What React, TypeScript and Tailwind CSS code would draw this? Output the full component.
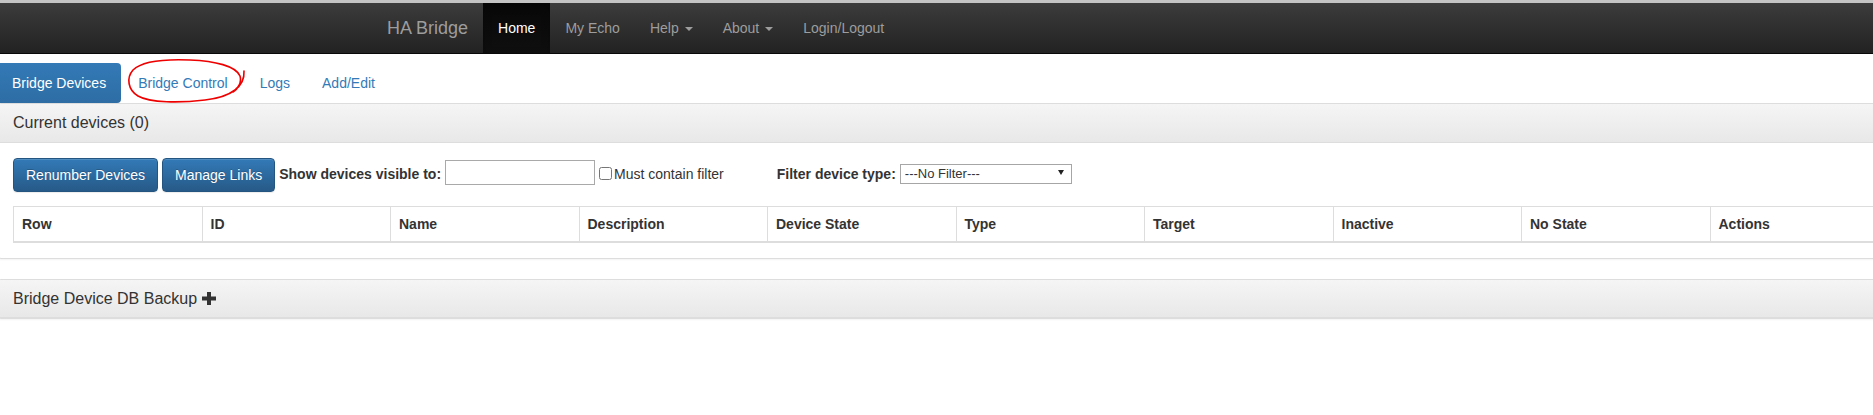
import React from "react";

const Caret = () => (
  <span className="ml-[6px] inline-block h-0 w-0 border-x-[4px] border-t-[4px] border-x-transparent border-t-current align-middle" />
);

const cols = ["Row", "ID", "Name", "Description", "Device State", "Type", "Target", "Inactive", "No State", "Actions"];

export default function App() {
  return (
    <div className="relative h-[415px] w-[1873px] overflow-hidden bg-white font-['Liberation_Sans',Arial,sans-serif] text-[14px] leading-[20px] text-[#333]">
      {/* top strip */}
      <div className="h-[3px] bg-[#c4c4c4]" />
      {/* navbar */}
      <nav className="flex h-[51px] border-b border-[#080808] bg-linear-to-b from-[#3c3c3c] to-[#222] pl-[372px]">
        <a className="h-[50px] px-[15px] py-[15px] text-[18px] leading-[20px] text-[#9d9d9d]">HA Bridge</a>
        <ul className="flex">
          <li className="h-[50px] bg-linear-to-b from-[#080808] to-[#0f0f0f] px-[15px] py-[15px] text-white shadow-[inset_0_3px_9px_rgba(0,0,0,0.25)]">Home</li>
          <li className="px-[15px] py-[15px] text-[#9d9d9d]">My Echo</li>
          <li className="px-[15px] py-[15px] text-[#9d9d9d]">
            Help<Caret />
          </li>
          <li className="px-[15px] py-[15px] text-[#9d9d9d]">
            About<Caret />
          </li>
          <li className="px-[15px] py-[15px] text-[#9d9d9d]">Login/Logout</li>
        </ul>
      </nav>

      <div className="-ml-[3px] w-[1918px]">
        {/* pills */}
        <ul className="mt-[9px] flex">
          <li className="rounded-[4px] bg-linear-to-b from-[#337ab7] to-[#2e6da4] px-[15px] py-[10px] text-white">Bridge Devices</li>
          <li className="ml-[2px] px-[15px] py-[10px] text-[#337ab7]">Bridge Control</li>
          <li className="ml-[2px] px-[15px] py-[10px] text-[#337ab7]">Logs</li>
          <li className="ml-[2px] px-[15px] py-[10px] text-[#337ab7]">Add/Edit</li>
        </ul>

        {/* panel 1 */}
        <div className="mb-[20px] rounded-[4px] border border-[#ddd] bg-white shadow-[0_1px_2px_rgba(0,0,0,0.05)]">
          <div className="rounded-t-[3px] border-b border-[#ddd] bg-linear-to-b from-[#f5f5f5] to-[#e8e8e8] px-[15px] py-[10px]">
            <h3 className="text-[16px] leading-[17.6px] text-[#333]">Current devices (0)</h3>
          </div>
          <div className="p-[15px]">
            <div className="flex items-center">
              <button className="h-[34px] rounded-[4px] border border-[#245580] bg-linear-to-b from-[#337ab7] to-[#265a88] px-[12px] text-white shadow-[inset_0_1px_0_rgba(255,255,255,0.15),0_1px_1px_rgba(0,0,0,0.075)] [text-shadow:0_-1px_0_rgba(0,0,0,0.2)]">
                Renumber Devices
              </button>
              <button className="ml-[4px] h-[34px] rounded-[4px] border border-[#245580] bg-linear-to-b from-[#337ab7] to-[#265a88] px-[12px] text-white shadow-[inset_0_1px_0_rgba(255,255,255,0.15),0_1px_1px_rgba(0,0,0,0.075)] [text-shadow:0_-1px_0_rgba(0,0,0,0.2)]">
                Manage Links
              </button>
              <label className="mb-[2px] ml-[4px] text-[14px] font-bold">Show devices visible to:</label>
              <input
                type="text"
                className="mb-[4px] ml-[4px] h-[25px] w-[150px] border border-[#a9a9a9] px-[2px] text-[13px]"
              />
              <input type="checkbox" className="mb-[2px] ml-[4px] mr-[2px] h-[13px] w-[13px]" />
              <span className="mb-[2px] text-[14px]">Must contain filter</span>
              <label className="mb-[2px] ml-[53px] text-[14px] font-bold">Filter device type:</label>
              <div className="relative mb-[4px] ml-[4px] h-[20px] w-[172px]">
                <select className="h-[20px] w-full appearance-none border border-[#a6a6a6] bg-white pl-[4px] text-[13px] leading-[18px] text-[#333]">
                  <option>---No Filter---</option>
                </select>
                <span className="pointer-events-none absolute right-[8px] top-[7px] h-0 w-0 border-x-[3px] border-t-[5px] border-x-transparent border-t-[#222]" />
              </div>
            </div>
            <table className="mt-[14px] w-[1886px] table-fixed border-collapse border border-[#ddd]">
              <thead>
                <tr>
                  {cols.map((c) => (
                    <th
                      key={c}
                      className="border border-b-2 border-[#ddd] px-[8px] py-[7px] text-left font-bold leading-[20px]"
                    >
                      {c}
                    </th>
                  ))}
                </tr>
              </thead>
            </table>
          </div>
        </div>

        {/* panel 2 */}
        <div className="rounded-[4px] border border-[#ddd] bg-white shadow-[0_1px_2px_rgba(0,0,0,0.05)]">
          <div className="rounded-t-[3px] border-b border-[#ddd] bg-linear-to-b from-[#f5f5f5] to-[#e8e8e8] px-[15px] py-[10px]">
            <h3 className="flex items-center text-[16px] leading-[17.6px] text-[#333]">
              Bridge Device DB Backup
              <svg className="ml-[5px]" width="14" height="13" viewBox="0 0 14 13">
                <rect x="0" y="4.5" width="14" height="4" fill="#333" />
                <rect x="5" y="0" width="4" height="13" fill="#333" />
              </svg>
            </h3>
          </div>
        </div>
      </div>

      {/* red hand-drawn annotation */}
      <svg className="pointer-events-none absolute left-0 top-0" width="260" height="120" viewBox="0 0 260 120">
        <path
          d="M 244 71 C 245 86, 232 97, 205 100 C 180 103, 150 103, 138 96 C 128 90, 126 78, 133 70 C 142 61, 165 59, 190 60 C 215 61, 236 66, 240 76 C 242 82, 238 89, 233 92"
          fill="none"
          stroke="#e00"
          strokeWidth="1.6"
          strokeLinecap="round"
        />
      </svg>
    </div>
  );
}
